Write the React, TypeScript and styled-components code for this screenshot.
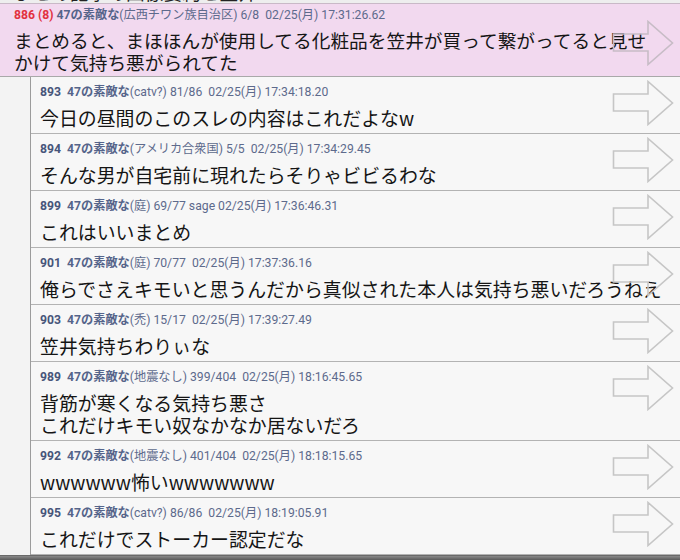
import styled, { createGlobalStyle } from "styled-components";

const GlobalStyle = createGlobalStyle`
    html, body {
        margin: 0;
        padding: 0;
        background: #f3f3f3;
        overflow: hidden;
    }
`;

const Page = styled.div`
    width: 680px;
    height: 560px;
    overflow: hidden;
    display: flex;
    flex-direction: column;
    font-family: "Noto Sans CJK JP", "Noto Sans", sans-serif;
    background: #f3f3f3;
`;

const TopClip = styled.div`
    height: 3px;
    flex-shrink: 0;
    overflow: hidden;
    background: #eeeeee;
    padding-left: 14px;
`;

const ClipText = styled.div`
    margin-top: -19px;
    font-size: 18.7px;
    line-height: 22px;
    color: #222;
    white-space: nowrap;
`;

const Post = styled.div`
    position: relative;
    flex-shrink: 0;
    background: #f2d9ef;
    border-top: 1px solid #c9b9c7;
    border-bottom: 1px solid #a9a9a9;
    padding: 3px 0 3px 14px;
`;

const Replies = styled.div`
    display: flex;
    flex-shrink: 0;
`;

const Gutter = styled.div`
    width: 30px;
    flex-shrink: 0;
    background: #f3f3f3;
    border-right: 1px solid #9c9c9c;
`;

const List = styled.div`
    flex: 1;
    display: flex;
    flex-direction: column;
`;

const Reply = styled.div`
    position: relative;
    background: #f7f7f7;
    border-bottom: 1px solid #b3b3b3;
    padding: 7px 0 4px 9px;
`;

const Header = styled.div`
    height: 16px;
    font-family: Roboto, "Noto Sans CJK JP", sans-serif;
    font-size: 12.2px;
    line-height: 16px;
    color: #5d6a8c;
    white-space: pre;
`;

const Num = styled.span<{ $hot?: boolean }>`
    font-weight: bold;
    color: ${(p) => (p.$hot ? "#e2323f" : "#47557a")};
`;

const Name = styled.span`
    font-weight: bold;
    color: #55648a;
`;

const Body = styled.div<{ $reply?: boolean; $lines: number }>`
    margin-top: ${(p) => (p.$reply ? "7px" : "6px")};
    height: ${(p) => p.$lines * 22}px;
    font-size: ${(p) => (p.$reply ? "18.9px" : "18.7px")};
    line-height: 22px;
    color: #151515;
    white-space: pre-line;
`;

const ArrowBox = styled.div<{ $top: number }>`
    position: absolute;
    right: 6px;
    top: ${(p) => p.$top}px;
    width: 62px;
    height: 46px;
`;

const BottomShade = styled.div`
    flex: 1;
    background: linear-gradient(#8a8a8a, #5a5a5a);
    border-top: 1px solid #6a6a6a;
`;

function Arrow({ top, color }: { top: number; color: string }) {
    return (
        <ArrowBox $top={top}>
            <svg width="62" height="46" viewBox="0 0 62 46">
                <polygon
                    points="1.5,14 36,14 36,1.5 60.5,23 36,44.5 36,31 1.5,31"
                    fill="none"
                    stroke={color}
                    strokeWidth="1.6"
                    strokeLinejoin="miter"
                />
            </svg>
        </ArrowBox>
    );
}

type ReplyData = {
    num: string;
    from: string;
    rest: string;
    text: string;
};

const replies: ReplyData[] = [
    { num: "893", from: "(catv?)", rest: " 81/86  02/25(月) 17:34:18.20", text: "今日の昼間のこのスレの内容はこれだよなw" },
    { num: "894", from: "(アメリカ合衆国)", rest: " 5/5  02/25(月) 17:34:29.45", text: "そんな男が自宅前に現れたらそりゃビビるわな" },
    { num: "899", from: "(庭)", rest: " 69/77 sage 02/25(月) 17:36:46.31", text: "これはいいまとめ" },
    { num: "901", from: "(庭)", rest: " 70/77  02/25(月) 17:37:36.16", text: "俺らでさえキモいと思うんだから真似された本人は気持ち悪いだろうねえ" },
    { num: "903", from: "(禿)", rest: " 15/17  02/25(月) 17:39:27.49", text: "笠井気持ちわりぃな" },
    { num: "989", from: "(地震なし)", rest: " 399/404  02/25(月) 18:16:45.65", text: "背筋が寒くなる気持ち悪さ\nこれだけキモい奴なかなか居ないだろ" },
    { num: "992", from: "(地震なし)", rest: " 401/404  02/25(月) 18:18:15.65", text: "wwwwww怖いwwwwwww" },
    { num: "995", from: "(catv?)", rest: " 86/86  02/25(月) 18:19:05.91", text: "これだけでストーカー認定だな" },
];

export default function App() {
    return (
        <>
            <GlobalStyle />
            <Page>
                <TopClip>
                    <ClipText>まとめ記事の画像要約と笠井</ClipText>
                </TopClip>
                <Post>
                    <Header>
                        <Num $hot>886 (8)</Num> <Name>47の素敵な</Name>(広西チワン族自治区) 6/8  02/25(月) 17:31:26.62
                    </Header>
                    <Body $lines={2}>
                        {"まとめると、まほほんが使用してる化粧品を笠井が買って繋がってると見せ\nかけて気持ち悪がられてた"}
                    </Body>
                    <Arrow top={16} color="#c7bcc6" />
                </Post>
                <Replies>
                    <Gutter />
                    <List>
                        {replies.map((r) => (
                            <Reply key={r.num}>
                                <Header>
                                    <Num>{r.num}</Num>{"  "}<Name>47の素敵な</Name>
                                    {r.from}
                                    {r.rest}
                                </Header>
                                <Body $reply $lines={r.text.split("\n").length}>
                                    {r.text}
                                </Body>
                                <Arrow top={3} color="#c6c6c6" />
                            </Reply>
                        ))}
                    </List>
                </Replies>
                <BottomShade />
            </Page>
        </>
    );
}
